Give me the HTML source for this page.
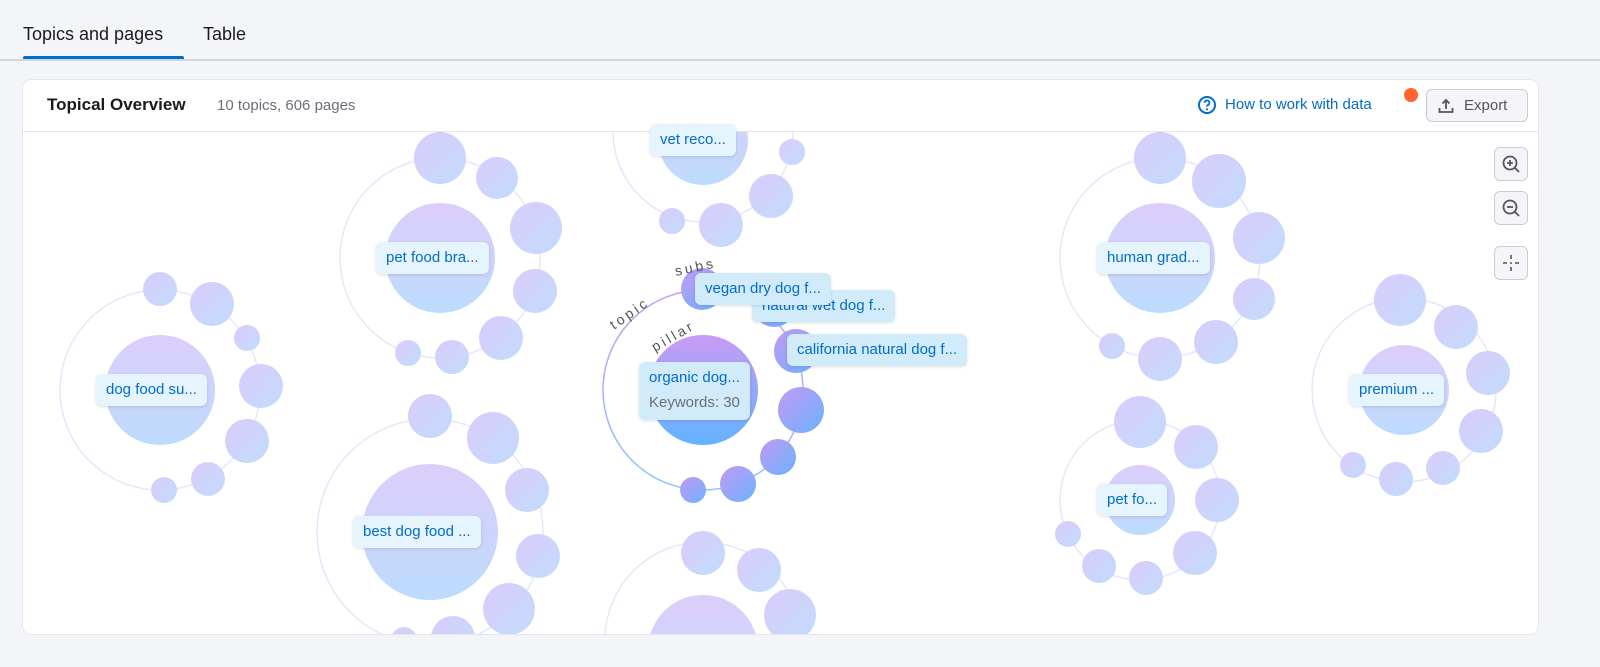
<!DOCTYPE html>
<html style="overflow:hidden;width:1600px;height:667px"><head><meta charset="utf-8"><style>
*{margin:0;padding:0;box-sizing:border-box}
body{width:1600px;height:667px;background:#f4f5f9;font-family:"Liberation Sans",sans-serif;position:relative;overflow:hidden}
.tab{position:absolute;top:24px;font-size:18px;color:#1b1b1f}
.card{position:absolute;left:23px;top:80px;width:1515px;height:554px;background:#fff;border-radius:8px;box-shadow:0 0 0 1px #e4e6ec;overflow:hidden}
.lbl{position:absolute;background:#e6f4fd;border-radius:6px;box-shadow:0 1px 3px rgba(0,0,0,.13);color:#006dca;font-size:15px;padding:0 10px;height:32px;line-height:32px;white-space:nowrap}
.lbl.s{background:#d2ebfb}
.zb{position:absolute;left:1471px;width:34px;height:34px;border:1px solid #c9ccd6;border-radius:6px;background:#f4f5f9}
</style></head><body>
<div class="tab" style="left:23px">Topics and pages</div>
<div class="tab" style="left:203px">Table</div>
<div style="position:absolute;left:23px;top:56px;width:161px;height:4px;background:#006dca;border-radius:2px"></div>
<div style="position:absolute;left:0;top:59px;width:1600px;height:2px;background:#d4d6de"></div>
<div class="card">
<div style="position:absolute;left:24px;top:15px;font-size:17px;font-weight:bold;color:#1b1b1f">Topical Overview</div>
<div style="position:absolute;left:194px;top:17px;font-size:15px;color:#6c6e79">10 topics, 606 pages</div>
<svg style="position:absolute;left:1174px;top:15px" width="20" height="20" viewBox="0 0 20 20"><circle cx="10" cy="10" r="8" fill="none" stroke="#006dca" stroke-width="2"/><path d="M7.6 7.8a2.4 2.4 0 1 1 3.4 2.2c-.7.3-1 .8-1 1.5" fill="none" stroke="#006dca" stroke-width="1.8"/><circle cx="10" cy="14.3" r="1.1" fill="#006dca"/></svg>
<div style="position:absolute;left:1202px;top:16px;font-size:15px;color:#006dca">How to work with data</div>
<div style="position:absolute;left:1381px;top:8px;width:14px;height:14px;border-radius:50%;background:#ff642d"></div>
<div style="position:absolute;left:1403px;top:9px;width:102px;height:33px;border:1px solid #c9ccd6;border-radius:6px;background:#f4f5f9;font-size:15px;color:#555;line-height:31px;padding-left:37px">Export
<svg style="position:absolute;left:10px;top:7px" width="18" height="18" viewBox="0 0 18 18"><path d="M9 12V3M5.5 6.5 9 3l3.5 3.5M2.5 11v4h13v-4" fill="none" stroke="#555" stroke-width="1.8"/></svg></div>
<div style="position:absolute;left:0;top:51px;width:1515px;height:1px;background:#e4e6ec"></div>
<svg style="position:absolute;left:-23px;top:-80px" width="1600" height="667" viewBox="0 0 1600 667">
<defs>
<linearGradient id="g" x1="0" y1="0" x2="0" y2="1"><stop offset="0" stop-color="#ddcdfb"/><stop offset="1" stop-color="#bcdcfd"/></linearGradient>
<linearGradient id="gs" x1="0" y1="0" x2="1" y2="1"><stop offset="0" stop-color="#dbcbfb"/><stop offset="1" stop-color="#c1dcfd"/></linearGradient>
<linearGradient id="p" x1="0" y1="0" x2="0" y2="1"><stop offset="0" stop-color="#c99af5"/><stop offset="1" stop-color="#62b4ff"/></linearGradient>
<linearGradient id="ps" x1="0" y1="0" x2="1" y2="1"><stop offset="0" stop-color="#c19af3"/><stop offset="1" stop-color="#6cb2ff"/></linearGradient>
<linearGradient id="pr" x1="0" y1="0" x2="0" y2="1"><stop offset="0" stop-color="#c99af5"/><stop offset="1" stop-color="#8cc6ff"/></linearGradient>
<clipPath id="c"><rect x="23" y="132" width="1515" height="502"/></clipPath>
</defs>
<g clip-path="url(#c)" fill="url(#g)">
<g fill="none" stroke="#e3e3fa" stroke-width="1.3">
<circle cx="160" cy="390" r="100"/><circle cx="440" cy="258" r="100"/><circle cx="703" cy="132" r="90"/>
<circle cx="430" cy="532" r="113"/><circle cx="703" cy="640" r="98"/><circle cx="1160" cy="258" r="100"/>
<circle cx="1140" cy="500" r="80"/><circle cx="1404" cy="390" r="92"/>
</g>
<circle cx="703" cy="390" r="100" fill="none" stroke="url(#pr)" stroke-width="1.5"/>
<circle cx="160" cy="390" r="55"/><circle cx="440" cy="258" r="55"/><circle cx="703" cy="140" r="45"/>
<circle cx="430" cy="532" r="68"/><circle cx="703" cy="650" r="55"/><circle cx="1160" cy="258" r="55"/>
<circle cx="1140" cy="500" r="35"/><circle cx="1404" cy="390" r="45"/>
<g fill="url(#gs)">
<circle cx="160" cy="289" r="17"/><circle cx="212" cy="304" r="22"/><circle cx="247" cy="338" r="13"/><circle cx="261" cy="386" r="22"/><circle cx="247" cy="441" r="22"/><circle cx="208" cy="479" r="17"/><circle cx="164" cy="490" r="13"/>
<circle cx="440" cy="158" r="26"/><circle cx="497" cy="178" r="21"/><circle cx="536" cy="228" r="26"/><circle cx="535" cy="291" r="22"/><circle cx="501" cy="338" r="22"/><circle cx="452" cy="357" r="17"/><circle cx="408" cy="353" r="13"/>
<circle cx="792" cy="152" r="13"/><circle cx="771" cy="196" r="22"/><circle cx="721" cy="225" r="22"/><circle cx="672" cy="221" r="13"/>
<circle cx="430" cy="416" r="22"/><circle cx="493" cy="438" r="26"/><circle cx="527" cy="490" r="22"/><circle cx="538" cy="556" r="22"/><circle cx="509" cy="609" r="26"/><circle cx="453" cy="638" r="22"/><circle cx="404" cy="640" r="13"/>
<circle cx="703" cy="553" r="22"/><circle cx="759" cy="570" r="22"/><circle cx="790" cy="615" r="26"/>
<circle cx="1160" cy="158" r="26"/><circle cx="1219" cy="181" r="27"/><circle cx="1259" cy="238" r="26"/><circle cx="1254" cy="299" r="21"/><circle cx="1216" cy="342" r="22"/><circle cx="1160" cy="359" r="22"/><circle cx="1112" cy="346" r="13"/>
<circle cx="1140" cy="422" r="26"/><circle cx="1196" cy="447" r="22"/><circle cx="1217" cy="500" r="22"/><circle cx="1195" cy="553" r="22"/><circle cx="1146" cy="578" r="17"/><circle cx="1099" cy="566" r="17"/><circle cx="1068" cy="534" r="13"/>
<circle cx="1400" cy="300" r="26"/><circle cx="1456" cy="327" r="22"/><circle cx="1488" cy="373" r="22"/><circle cx="1481" cy="431" r="22"/><circle cx="1443" cy="468" r="17"/><circle cx="1396" cy="479" r="17"/><circle cx="1353" cy="465" r="13"/>
</g>
<circle cx="703" cy="390" r="55" fill="url(#p)"/>
<g fill="url(#ps)">
<circle cx="702" cy="289" r="21"/><circle cx="774" cy="306" r="21"/><circle cx="796" cy="351" r="22"/><circle cx="801" cy="410" r="23"/><circle cx="778" cy="457" r="18"/><circle cx="738" cy="484" r="18"/><circle cx="693" cy="490" r="13"/>
</g>
<g font-family="Liberation Sans" font-size="14" fill="#555" letter-spacing="3">
<text transform="translate(614,330) rotate(-35)">topic</text>
<text transform="translate(676,276) rotate(-12)">subs</text>
<text transform="translate(655,352) rotate(-30)">pillar</text>
</g>
</g>
</svg>
<div class="lbl" style="left:73px;top:294px">dog food su...</div>
<div class="lbl" style="left:353px;top:162px">pet food bra...</div>
<div class="lbl" style="left:627px;top:44px">vet reco...</div>
<div class="lbl" style="left:330px;top:436px">best dog food ...</div>
<div class="lbl" style="left:1074px;top:162px">human grad...</div>
<div class="lbl" style="left:1074px;top:404px">pet fo...</div>
<div class="lbl" style="left:1326px;top:294px">premium ...</div>
<div class="lbl s" style="left:729px;top:210px">natural wet dog f...</div>
<div class="lbl s" style="left:672px;top:193px">vegan dry dog f...</div>
<div class="lbl s" style="left:764px;top:254px">california natural dog f...</div>
<div class="lbl s" style="left:616px;top:282px;height:58px;line-height:25px;padding-top:3px">organic dog...<br><span style="color:#6c6e79">Keywords: 30</span></div>
<div class="zb" style="top:67px"><svg width="32" height="32" viewBox="0 0 32 32"><circle cx="15" cy="15" r="6.5" fill="none" stroke="#555" stroke-width="1.8"/><path d="M20 20l4 4M12 15h6M15 12v6" stroke="#555" stroke-width="1.8"/></svg></div>
<div class="zb" style="top:111px"><svg width="32" height="32" viewBox="0 0 32 32"><circle cx="15" cy="15" r="6.5" fill="none" stroke="#555" stroke-width="1.8"/><path d="M20 20l4 4M12 15h6" stroke="#555" stroke-width="1.8"/></svg></div>
<div class="zb" style="top:166px"><svg width="32" height="32" viewBox="0 0 32 32"><path d="M16 8v4M16 20v4M8 16h4M20 16h4" stroke="#555" stroke-width="1.6"/><circle cx="16" cy="16" r="1" fill="#555"/></svg></div>
</div>
</body></html>
